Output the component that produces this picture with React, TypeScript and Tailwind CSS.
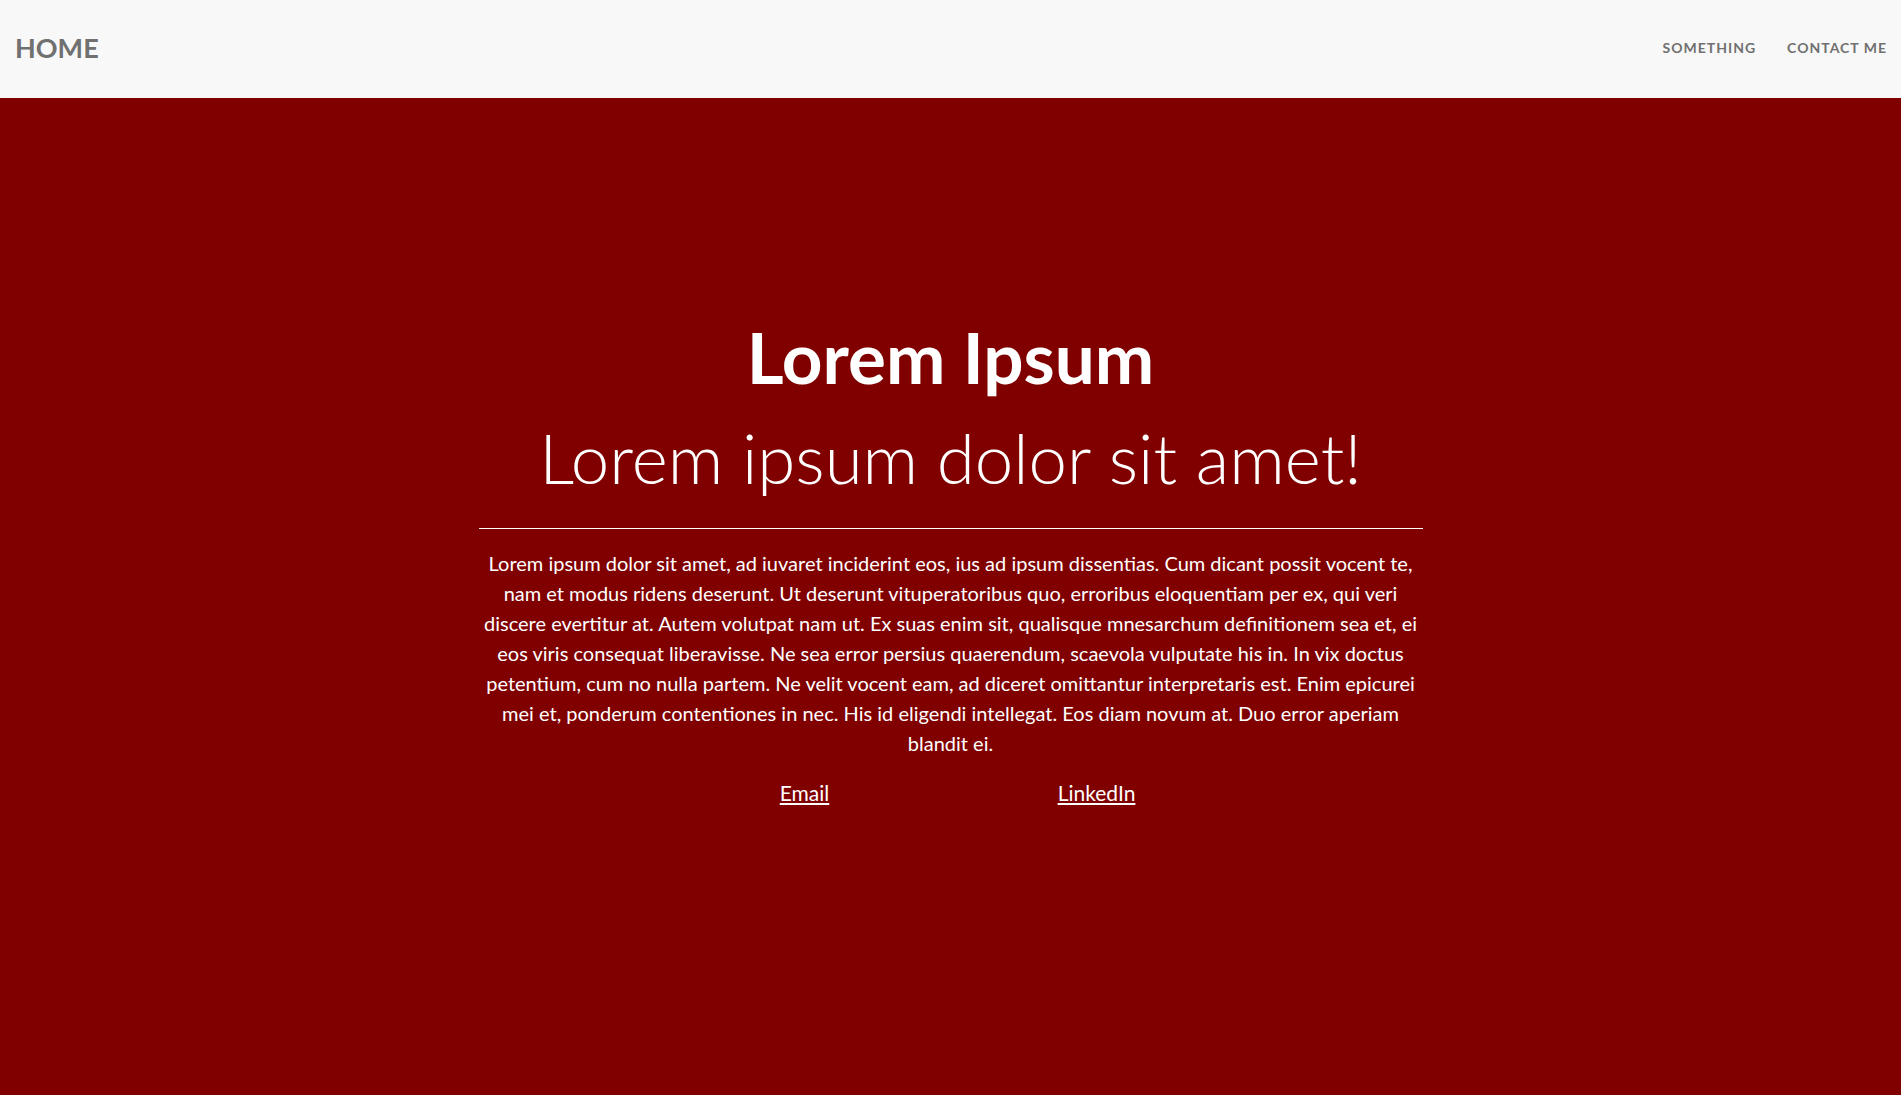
import React from "react";

const paragraph =
  "Lorem ipsum dolor sit amet, ad iuvaret inciderint eos, ius ad ipsum dissentias. Cum dicant possit vocent te, nam et modus ridens deserunt. Ut deserunt vituperatoribus quo, erroribus eloquentiam per ex, qui veri discere evertitur at. Autem volutpat nam ut. Ex suas enim sit, qualisque mnesarchum definitionem sea et, ei eos viris consequat liberavisse. Ne sea error persius quaerendum, scaevola vulputate his in. In vix doctus petentium, cum no nulla partem. Ne velit vocent eam, ad diceret omittantur interpretaris est. Enim epicurei mei et, ponderum contentiones in nec. His id eligendi intellegat. Eos diam novum at. Duo error aperiam blandit ei.";

const NavBar = () => {
  return (
    <nav className="h-[98px] flex items-center justify-between bg-[#f8f8f8] pl-[15px] pr-[14px] pb-1">
      <a href="#" className="text-[27px] font-bold text-[#707070] leading-none">
        HOME
      </a>
      <div className="flex items-center gap-[31px]">
        <a href="#" className="text-[14px] font-bold tracking-[1px] text-[#707070] uppercase">
          Something
        </a>
        <a href="#" className="text-[14px] font-bold tracking-[1px] text-[#707070] uppercase">
          Contact Me
        </a>
      </div>
    </nav>
  );
};

export default function App() {
  return (
    <div className="h-screen flex flex-col font-['Lato','Liberation_Sans',sans-serif]">
      <NavBar />

      {/* Hero */}
      <main className="flex-1 bg-[#800000] text-white flex flex-col items-center pt-[219px]">
        <h1 className="text-[71px] font-bold leading-[79px]">Lorem Ipsum</h1>
        <h2 className="text-[69px] font-light leading-[79px] mt-[22px]">Lorem ipsum dolor sit amet!</h2>

        <div className="w-[944px] mt-[31px]">
          <hr className="border-t border-white" />
          <p className="mt-[19px] text-[20px] leading-[30px] text-center">{paragraph}</p>

          <div className="mt-5 flex justify-center text-[21px] leading-[30px]">
            <div className="w-[292px] text-center">
              <a href="#" className="underline">Email</a>
            </div>
            <div className="w-[292px] text-center">
              <a href="#" className="underline">LinkedIn</a>
            </div>
          </div>
        </div>
      </main>
    </div>
  );
}
